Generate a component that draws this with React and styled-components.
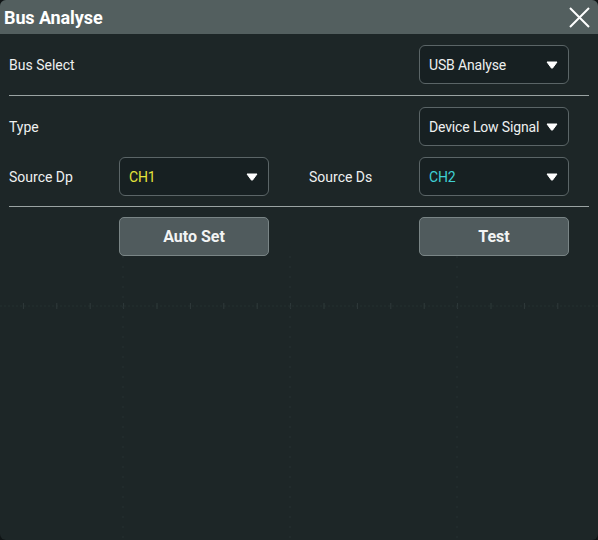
import React from "react";
import styled, { createGlobalStyle } from "styled-components";

const Global = createGlobalStyle`
  html, body { margin: 0; padding: 0; background: #0f1415; }
  body { font-family: Roboto, "Liberation Sans", sans-serif; }
`;

const Window = styled.div`
  width: 598px;
  height: 540px;
  background: #1d2627;
  border-radius: 6px;
  overflow: hidden;
  display: flex;
  flex-direction: column;
  color: #eef0f0;
`;

const Header = styled.div`
  height: 34px;
  background: #535f5f;
  display: flex;
  align-items: center;
  justify-content: space-between;
  padding: 0 8px 0 4px;
  flex-shrink: 0;
`;

const Title = styled.div`
  font-size: 18px;
  font-weight: 700;
  color: #ffffff;
  letter-spacing: -0.1px;
`;

const Close = styled.button`
  width: 22px;
  height: 22px;
  padding: 0;
  border: none;
  background: transparent;
  display: flex;
  align-items: center;
  justify-content: center;
  cursor: pointer;
`;

const Body = styled.div`
  padding: 0 9px;
  display: flex;
  flex-direction: column;
`;

const Row = styled.div`
  display: grid;
  grid-template-columns: 110px 150px 150px 150px;
  align-items: center;
  height: 39px;
  margin-top: ${(p) => p.$top}px;
`;

const Label = styled.div`
  font-size: 14px;
  color: #eef0f0;
  padding-left: ${(p) => (p.$inset ? 40 : 0)}px;
`;

const Select = styled.div`
  grid-column: ${(p) => p.$col};
  height: 39px;
  box-sizing: border-box;
  border: 1px solid #5b6567;
  border-radius: 6px;
  background: #172022;
  display: flex;
  align-items: center;
  justify-content: space-between;
  gap: 4px;
  padding: 0 10px 0 9px;
  font-size: 14px;
  letter-spacing: -0.15px;
  white-space: nowrap;
  color: ${(p) => p.$color || "#eef0f0"};
`;

const Divider = styled.div`
  height: 1px;
  background: #9aa3a3;
  margin-top: ${(p) => p.$top}px;
`;

const Button = styled.button`
  grid-column: ${(p) => p.$col};
  height: 39px;
  box-sizing: border-box;
  border: 1px solid #7a8586;
  border-radius: 5px;
  background: #505b5d;
  color: #f2f4f4;
  font-family: Roboto, "Liberation Sans", sans-serif;
  font-size: 16px;
  font-weight: 700;
  cursor: pointer;
`;

const Graticule = styled.svg`
  display: block;
  flex: 1;
  width: 598px;
`;

const Caret = () => (
  <svg width="12" height="8" viewBox="0 0 12 8" style={{ flexShrink: 0 }}>
    <path d="M1 1 H11 L6.6 7 Q6 7.7 5.4 7 Z" fill="#ffffff" stroke="#ffffff" strokeWidth="1" strokeLinejoin="round" />
  </svg>
);

function Dropdown({ col, color, children }) {
  return (
    <Select $col={col} $color={color}>
      <span>{children}</span>
      <Caret />
    </Select>
  );
}

export default function App() {
  const ticks = [];
  for (let i = 0; i < 18; i++) ticks.push(-10 + i * 33.4);
  return (
    <>
      <Global />
      <Window>
        <Header>
          <Title>Bus Analyse</Title>
          <Close aria-label="close">
            <svg width="21" height="21" viewBox="0 0 21 21">
              <path d="M1 1 L20 20 M20 1 L1 20" stroke="#ffffff" strokeWidth="2" />
            </svg>
          </Close>
        </Header>
        <Body>
          <Row $top={11}>
            <Label>Bus Select</Label>
            <Dropdown col="4">USB Analyse</Dropdown>
          </Row>
          <Divider $top={11} />
          <Row $top={11}>
            <Label>Type</Label>
            <Dropdown col="4">Device Low Signal</Dropdown>
          </Row>
          <Row $top={11}>
            <Label>Source Dp</Label>
            <Dropdown col="2" color="#e4e43a">CH1</Dropdown>
            <Label $inset>Source Ds</Label>
            <Dropdown col="4" color="#3fd0d4">CH2</Dropdown>
          </Row>
          <Divider $top={10} />
          <Row $top={10}>
            <Button $col="2">Auto Set</Button>
            <Button $col="4">Test</Button>
          </Row>
        </Body>
        <Graticule viewBox="0 0 598 284" preserveAspectRatio="none">
          <line x1="0" y1="50" x2="598" y2="50" stroke="#253031" strokeWidth="1" strokeDasharray="2 2" />
          {ticks.map((x, i) => (
            <line key={i} x1={x} y1="47" x2={x} y2="53" stroke="#2f3a3b" strokeWidth="1" />
          ))}
          {[123, 290, 457].map((x) => (
            <line key={x} x1={x} y1="0" x2={x} y2="284" stroke="#273132" strokeWidth="1" strokeDasharray="2 8" />
          ))}
        </Graticule>
      </Window>
    </>
  );
}
